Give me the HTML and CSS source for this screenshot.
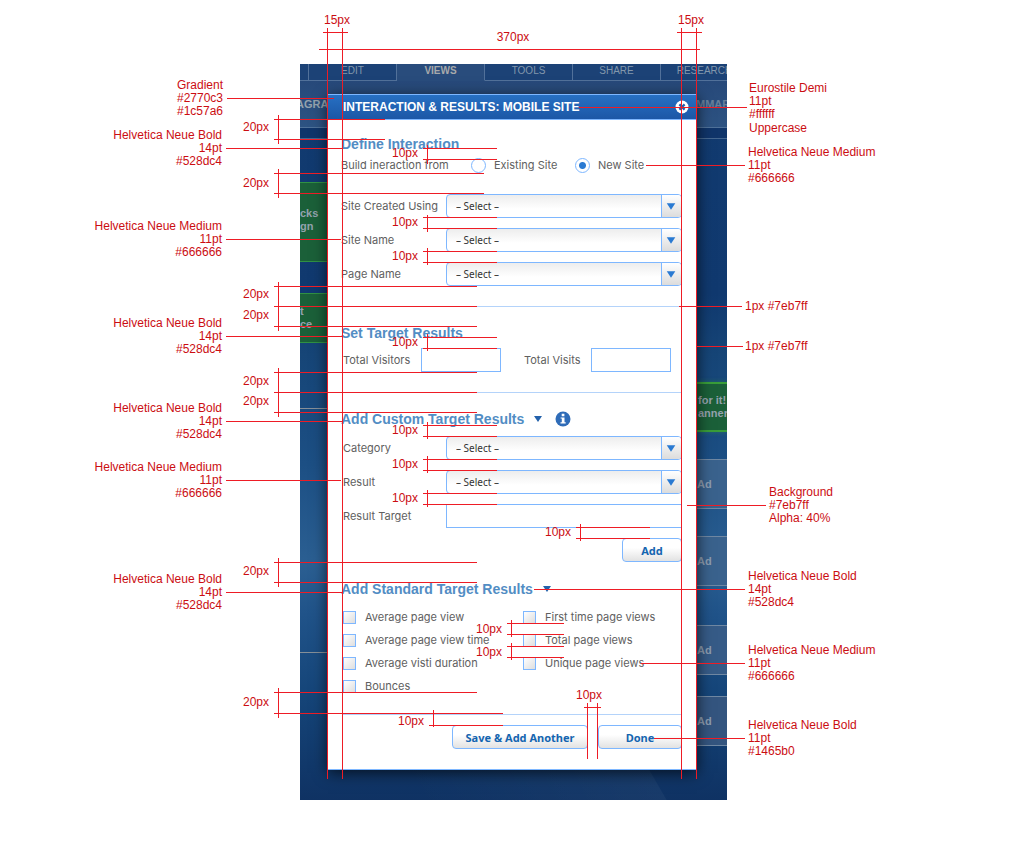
FILE: index.html
```html
<!DOCTYPE html>
<html lang="en">
<head>
<meta charset="utf-8">
<title>Interaction &amp; Results: Mobile Site</title>
<link rel="stylesheet" href="styles.css">
</head>
<body>
<main class="sheet">
  <div class="stage">
    <div class="backdrop">
      <div class="tabs"><span class="tab tab-first"></span><span class="tab">EDIT</span><span class="tab tab-active">VIEWS</span><span class="tab">TOOLS</span><span class="tab">SHARE</span><span class="tab">RESEARCH</span></div>
      <div class="band"><span>AGRA</span><span class="dim">MMAR</span></div>
      <div class="strip"></div>
      <div class="rails">
        <div class="rail rail-left">
          <div class="green tall">cks<br>gn</div>
          <div class="green">t<br>ce</div>
          <div class="rule rule-near"></div>
          <div class="rule rule-far"></div>
        </div>
        <div class="rail rail-right">
          <div class="green glow">for it!<br>anner</div>
          <div class="ad">Ad</div>
          <div class="ad">Ad</div>
          <div class="ad ad-apart">Ad</div>
          <div class="ad ad-close">Ad</div>
        </div>
      </div>
    </div>

    <form class="dialog">
      <header class="bar">
        <h1>INTERACTION &amp; RESULTS: MOBILE SITE</h1>
        <button class="close" type="button" aria-label="Close">
          <svg viewBox="0 0 14 14" width="14" height="14"><circle cx="7" cy="7" r="6.5" fill="#fff"/><path d="M4.4 4.4 9.6 9.6M9.6 4.4 4.4 9.6" stroke="#1f5fb2" stroke-width="2.2"/></svg>
        </button>
      </header>
      <div class="content">
        <section class="define">
          <h2>Define Interaction</h2>
          <div class="source">
            <span class="source-label">Build ineraction from</span>
            <label class="existing"><input type="radio" name="source">Existing Site</label>
            <label class="new"><input type="radio" name="source" checked>New Site</label>
          </div>
          <div class="fields">
            <div class="field"><label for="using">Site Created Using</label><span class="select"><select id="using"><option>– Select –</option></select><svg class="cell" viewBox="0 0 20 22"><path d="M5 8H14L9.500 15Z"/></svg></span></div>
            <div class="field"><label for="site">Site Name</label><span class="select"><select id="site"><option>– Select –</option></select><svg class="cell" viewBox="0 0 20 22"><path d="M5 8H14L9.500 15Z"/></svg></span></div>
            <div class="field"><label for="page">Page Name</label><span class="select"><select id="page"><option>– Select –</option></select><svg class="cell" viewBox="0 0 20 22"><path d="M5 8H14L9.500 15Z"/></svg></span></div>
          </div>
        </section>

        <section class="targets">
          <h2>Set Target Results</h2>
          <div class="totals">
            <label for="visitors">Total Visitors</label><input class="box" id="visitors" type="text">
            <label for="visits">Total Visits</label><input class="box" id="visits" type="text">
          </div>
        </section>

        <section class="custom">
          <h2>Add Custom Target Results
            <svg class="caret" viewBox="0 0 8 6" width="8" height="6"><path d="M0 0H8L4 6Z"/></svg>
            <svg class="info" viewBox="0 0 16 16" width="16" height="16"><circle cx="8" cy="8" r="7.500" fill="#2f6cb8"/><path d="M6.700 2.800H9.400V5.200H6.700ZM5.600 6.400H9.500V11.300H10.700V12.600H5.500V11.300H6.800V7.600H5.600Z" fill="#fff"/></svg>
          </h2>
          <div class="fields">
            <div class="field"><label for="category">Category</label><span class="select"><select id="category"><option>– Select –</option></select><svg class="cell" viewBox="0 0 20 22"><path d="M5 8H14L9.500 15Z"/></svg></span></div>
            <div class="field"><label for="result">Result</label><span class="select"><select id="result"><option>– Select –</option></select><svg class="cell" viewBox="0 0 20 22"><path d="M5 8H14L9.500 15Z"/></svg></span></div>
            <div class="field"><label for="target">Result Target</label><input class="box" id="target" type="text"></div>
          </div>
          <div class="actions"><button class="btn add" type="button">Add</button></div>
        </section>

        <section class="standard">
          <h2>Add Standard Target Results
            <svg class="caret" viewBox="0 0 8 6" width="8" height="6"><path d="M0 0H8L4 6Z"/></svg>
          </h2>
          <div class="checks">
            <label><input type="checkbox">Average page view</label>
            <label><input type="checkbox">First time page views</label>
            <label><input type="checkbox">Average page view time</label>
            <label><input type="checkbox">Total page views</label>
            <label><input type="checkbox">Average visti duration</label>
            <label><input type="checkbox">Unique page views</label>
            <label><input type="checkbox">Bounces</label>
          </div>
        </section>

        <footer class="actions">
          <button class="btn save" type="button">Save &amp; Add Another</button>
          <button class="btn done" type="button">Done</button>
        </footer>
      </div>
    </form>
  </div>

  <svg class="callouts" viewBox="0 0 1024 868" width="1024" height="868">
    <g class="lines">
      <path d="M327.500 28V779M342.500 28V779M681.500 28V779M696.500 28V779"/>
      <path d="M323 32.500H348M677 32.500H702M319 49.500H700"/>
      <path d="M227 98.500H334M226 148.500H342M226 239.500H341M226 336.500H342M226 421.500H342M226 480.500H341M226 592.500H342"/>
      <path d="M274 119.500H385M274 139.500H385M278.500 115V144"/>
      <path d="M274 173.500H484M274 193.500H484M278.500 169V198"/>
      <path d="M274 286.500H477M274 306.500H477M274 326.500H477M278.500 282V331"/>
      <path d="M274 372.500H477M274 392.500H477M274 412.500H477M278.500 368V417"/>
      <path d="M274 562.500H477M274 582.500H477M278.500 558V587"/>
      <path d="M274 692.500H477M274 713.500H503M278.500 688V718"/>
      <path d="M423 148.500H497M423 159.500H497M427.500 145V164"/>
      <path d="M423 217.500H497M423 228.500H497M427.500 215V232"/>
      <path d="M423 251.500H497M423 262.500H497M427.500 248V265"/>
      <path d="M423 337.500H497M423 348.500H497M427.500 334V351"/>
      <path d="M423 425.500H497M423 436.500H497M427.500 422V439"/>
      <path d="M423 459.500H497M423 470.500H497M427.500 456V473"/>
      <path d="M423 493.500H497M423 504.500H497M427.500 490V507"/>
      <path d="M576 527.500H650M576 538.500H650M580.500 524V541"/>
      <path d="M507 623.500H564M507 634.500H564M511.500 620V637"/>
      <path d="M507 646.500H564M507 657.500H564M511.500 643V660"/>
      <path d="M429 725.500H503M433.500 710V727"/>
      <path d="M584 707.500H601M587.500 703V759M597.500 703V759"/>
      <path d="M579 107.500H747M646 165.500H745M679 306.500H742M697 346.500H743M687 505.500H766M534 589.500H745M641 663.500H745M654 738.500H745"/>
    </g>
    <g class="mid">
      <text x="337" y="24">15px</text><text x="691" y="24">15px</text><text x="513" y="41">370px</text>
      <text x="405" y="157">10px</text><text x="405" y="226">10px</text><text x="405" y="260">10px</text>
      <text x="405" y="346">10px</text><text x="405" y="434">10px</text><text x="405" y="468">10px</text><text x="405" y="502">10px</text>
      <text x="558" y="536">10px</text><text x="489" y="633">10px</text><text x="489" y="656">10px</text>
      <text x="411" y="725">10px</text><text x="589" y="699">10px</text>
      <text x="256" y="131">20px</text><text x="256" y="187">20px</text><text x="256" y="298">20px</text><text x="256" y="319">20px</text>
      <text x="256" y="385">20px</text><text x="256" y="405">20px</text><text x="256" y="575">20px</text><text x="256" y="706">20px</text>
    </g>
    <g class="end">
      <text y="89"><tspan x="223">Gradient</tspan><tspan x="223" dy="13">#2770c3</tspan><tspan x="223" dy="13">#1c57a6</tspan></text>
      <text y="139"><tspan x="222">Helvetica Neue Bold</tspan><tspan x="222" dy="13">14pt</tspan><tspan x="222" dy="13">#528dc4</tspan></text>
      <text y="230"><tspan x="222">Helvetica Neue Medium</tspan><tspan x="222" dy="13">11pt</tspan><tspan x="222" dy="13">#666666</tspan></text>
      <text y="327"><tspan x="222">Helvetica Neue Bold</tspan><tspan x="222" dy="13">14pt</tspan><tspan x="222" dy="13">#528dc4</tspan></text>
      <text y="412"><tspan x="222">Helvetica Neue Bold</tspan><tspan x="222" dy="13">14pt</tspan><tspan x="222" dy="13">#528dc4</tspan></text>
      <text y="471"><tspan x="222">Helvetica Neue Medium</tspan><tspan x="222" dy="13">11pt</tspan><tspan x="222" dy="13">#666666</tspan></text>
      <text y="583"><tspan x="222">Helvetica Neue Bold</tspan><tspan x="222" dy="13">14pt</tspan><tspan x="222" dy="13">#528dc4</tspan></text>
    </g>
    <g>
      <text y="92"><tspan x="749">Eurostile Demi</tspan><tspan x="749" dy="13">11pt</tspan><tspan x="749" dy="13">#ffffff</tspan><tspan x="749" dy="14">Uppercase</tspan></text>
      <text y="156"><tspan x="748">Helvetica Neue Medium</tspan><tspan x="748" dy="13">11pt</tspan><tspan x="748" dy="13">#666666</tspan></text>
      <text x="745" y="310">1px #7eb7ff</text>
      <text x="745" y="350">1px #7eb7ff</text>
      <text y="496"><tspan x="769">Background</tspan><tspan x="769" dy="13">#7eb7ff</tspan><tspan x="769" dy="13">Alpha: 40%</tspan></text>
      <text y="580"><tspan x="748">Helvetica Neue Bold</tspan><tspan x="748" dy="13">14pt</tspan><tspan x="748" dy="13">#528dc4</tspan></text>
      <text y="654"><tspan x="748">Helvetica Neue Medium</tspan><tspan x="748" dy="13">11pt</tspan><tspan x="748" dy="13">#666666</tspan></text>
      <text y="729"><tspan x="748">Helvetica Neue Bold</tspan><tspan x="748" dy="13">11pt</tspan><tspan x="748" dy="13">#1465b0</tspan></text>
    </g>
  </svg>
</main>
</body>
</html>
```
FILE: styles.css
```css
* { box-sizing: border-box; }
body { margin: 0; background: #fff; font-family: "Liberation Sans", Arial, sans-serif; }
h1, h2 { margin: 0; }
input, select, button { margin: 0; }

.sheet { position: relative; padding: 64px 0 68px 300px; }
.callouts { position: absolute; top: 0; left: 0; pointer-events: none; font-size: 12px; fill: #cb0d12; }
.lines { fill: none; stroke: #ee1c25; stroke-width: 1; shape-rendering: crispEdges; }
.mid { text-anchor: middle; }
.end { text-anchor: end; }

.stage { position: relative; width: 427px; padding: 30px 30px 30px 28px; }

/* Dimmed application page behind the dialog */
.backdrop {
  position: absolute; inset: 0; overflow: hidden; display: flex; flex-direction: column;
  font-weight: bold; font-size: 11px; line-height: 13px; color: #94a2ad;
  background:
    linear-gradient(60deg, #0000 100px, #ffffff0a 317px, #0000 318px) 0 100% / 100% 30px no-repeat,
    linear-gradient(#123b70 0, #10396f 230px, #164577 290px, #1c4f84 400px, #2b5f92 500px, #205389 550px, #154579 630px, #0f3263 736px);
}
.tabs { display: flex; height: 17px; background: #1c4276; }
.tab {
  flex: none; width: 88px; border: solid #52719a; border-width: 0 1px 1px 0;
  font-size: 10px; font-weight: normal; text-align: center; color: #8297ac;
}
.tab-first { width: 9px; }
.tab-active { font-weight: bold; color: #a7a9ab; background: #294c7c; border-bottom-color: #294c7c; }
.band {
  display: flex; justify-content: space-between; height: 47px; padding-top: 16px;
  border-bottom: 1px solid #4f7199; background: linear-gradient(#27497a, #2d5382);
  font-size: 11px; line-height: 15px;
}
.band span { width: 31px; margin-left: -4px; }
.dim { color: #67809b; }
.strip { height: 11px; background: #10356a; border-bottom: 1px solid #456790; }
.rails { display: flex; justify-content: space-between; }
.rail { width: 31px; white-space: nowrap; }
.rail-left { padding-top: 43px; width: 28px; }
.rail-right { padding-top: 243px; }
.green { display: flex; align-items: center; height: 50px; background: #1b6039; border: solid #309143; border-width: 1px 0; }
.tall { height: 80px; margin-bottom: 31px; padding-bottom: 5px; }
.glow { border-width: 2px 0; border-color: #399d39; padding-left: 2px; box-shadow: 0 0 5px #399d3966; }
.rule { border-top: 1px solid #868f98; }
.rule-near { margin-top: 65px; }
.rule-far { margin-top: 243px; }
.ad { display: flex; align-items: center; height: 50px; margin-top: 27px; padding-left: 1px; background: #3a628d; border: solid #7088a3; border-width: 1px 0; color: #8c9cb0; }
.ad-apart { margin-top: 39px; background: #365b87; }
.ad-close { margin-top: 21px; background: #34557f; }

/* Dialog */
.dialog { position: relative; background: #fff; border-bottom: 1px solid #7eb7ff; box-shadow: 0 3px 14px #000000b3; color: #606060; font-size: 11px; line-height: 14px; font-family: Inter, "Liberation Sans", sans-serif; }
.bar { display: flex; align-items: center; justify-content: space-between; height: 26px; padding: 0 8px 0 15px; border: solid #7eb7ff; border-width: 1px 0; background: linear-gradient(#2770c3, #1c57a6); }
.bar h1 { font: bold 12px/14px "Liberation Sans", Arial, sans-serif; color: #fff; }
.close { display: block; width: 14px; height: 14px; padding: 0; border: 0; background: none; }
.close svg { display: block; }

.content { padding: 0 15px 20px; }
h2 { display: flex; align-items: center; height: 18px; font: bold 14px/18px "Liberation Sans", Arial, sans-serif; color: #528dc4; margin-left: -2px; }
.caret { margin-left: 10px; fill: #2361ab; }
.caret + .info { margin-left: 13px; }
section { border-bottom: 1px solid #b4d3fa; }
.define { padding: 15px 0 20px; }
.targets { padding: 17px 0 20px; }
.custom { padding: 17px 0 18px; border: 0; }
.standard { padding-bottom: 21px; }

.source { display: flex; align-items: center; height: 16px; margin: 4px 0 21px -2px; }
.source-label { width: 130px; }
.source label { display: flex; align-items: center; gap: 8px; }
.existing { width: 104px; }
input[type="radio"] { appearance: none; width: 15px; height: 15px; border: 1px solid #7eb7ff; border-radius: 50%; background: #fff; }
input[type="radio"]:checked { background: radial-gradient(circle, #2a7ad2 3px, #fff 4px); }

.fields { display: grid; gap: 10px; }
.field { display: grid; grid-template-columns: 103px 1fr; align-items: center; height: 24px; }
.define .field { margin-left: -2px; grid-template-columns: 105px 1fr; }
.field label { padding-bottom: 1px; white-space: nowrap; }
.select { position: relative; display: block; height: 24px; }
.select select {
  appearance: none; display: block; width: 100%; height: 24px; padding: 0 24px 0 9px;
  border: 1px solid #7eb7ff; border-radius: 4px; background: linear-gradient(#ededed, #fff 14px);
  font: 10px "Noto Sans", sans-serif; color: #333;
}
.cell { position: absolute; top: 1px; right: 1px; width: 20px; height: 22px; border-left: 1px solid #7eb7ff; border-radius: 0 3px 3px 0; background: linear-gradient(#fff, #dcdcdc); fill: #2a7ad2; pointer-events: none; }
.box { width: 80px; height: 24px; padding: 0 8px; border: 1px solid #7eb7ff; background: #fff; font: inherit; color: #333; }
.field .box { width: 100%; }
.custom .fields { margin-top: 8px; }

.totals { display: grid; grid-template-columns: 78px 103px 67px 80px; align-items: center; margin-top: 6px; }
.actions { display: flex; justify-content: flex-end; gap: 10px; padding-top: 10px; }
.btn { height: 24px; padding: 0; border: 1px solid #7eb7ff; border-radius: 4px; background: linear-gradient(#fff 40%, #e2e2e2); font: bold 11px "Noto Sans", sans-serif; color: #1465b0; }
.add { width: 60px; }
.save { width: 136px; }
.done { width: 84px; }

.checks { display: grid; grid-template-columns: 180px 1fr; gap: 9px 0; margin-top: 12px; }
.checks label { display: flex; align-items: center; gap: 9px; height: 14px; }
input[type="checkbox"] { appearance: none; width: 13px; height: 13px; border: 1px solid #7eb7ff; background: linear-gradient(135deg, #fff, #dedede); }
```
